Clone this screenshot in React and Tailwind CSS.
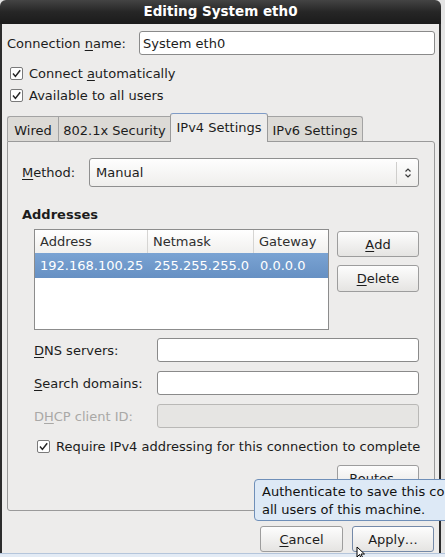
import React from "react";

function Check() {
  return (
    <span className="w-[13px] h-[13px] shrink-0 border border-[#7a7a7a] bg-white rounded-[2px] flex items-center justify-center">
      <svg width="11" height="11" viewBox="0 0 11 11">
        <path d="M2 5.6 L4.4 8.4 L9.2 2.2" fill="none" stroke="#262626" strokeWidth="1.5" />
      </svg>
    </span>
  );
}

function U({ children }) {
  return <span className="underline decoration-1 underline-offset-[2px]">{children}</span>;
}

function Btn({ children, className }) {
  return (
    <div
      className={
        "flex items-center justify-center rounded-[3px] border border-[#9d9d9d] bg-linear-to-b from-[#fdfdfd] to-[#e5e4e2] " +
        className
      }
    >
      {children}
    </div>
  );
}

function Field({ disabled }) {
  return (
    <div
      className={
        disabled
          ? "w-[262px] h-[24px] rounded-[3px] border border-[#b9b8b6] bg-[#e6e5e3]"
          : "w-[262px] h-[24px] rounded-[3px] border border-[#8a8a8a] bg-white"
      }
    />
  );
}

export default function App() {
  return (
    <div className="w-[445px] h-[557px] relative overflow-hidden bg-[#e4e4e4] font-['DejaVu_Sans',sans-serif] text-[13px] text-[#1c1c1c] leading-none flex flex-col">
      <div className="w-[441px] h-[553px] flex flex-col shrink-0">
        {/* Title bar */}
        <div className="h-[24px] shrink-0 rounded-t-[6px] bg-linear-to-b from-[#444444] via-[#262626] to-[#1b1b1b] text-white font-bold text-[13.5px] flex items-center justify-center">
          Editing System eth0
        </div>

        {/* Body */}
        <div className="flex-1 bg-[#edeceb] border-x-2 border-[#2c2c2c] flex flex-col pl-[5px] pr-[4px] pt-[7px]">
          {/* Connection name */}
          <div className="h-[24px] flex items-center">
            <div className="w-[132px]">
              Connection <U>n</U>ame:
            </div>
            <div className="w-[296px] h-[24px] rounded-[3px] border border-[#8a8a8a] bg-white flex items-center pl-[3px]">
              System eth0
            </div>
          </div>

          {/* Checkboxes */}
          <div className="mt-[7px] h-[22px] flex items-center pl-[3px] gap-[6px]">
            <Check />
            <span>
              Connect <U>a</U>utomatically
            </span>
          </div>
          <div className="h-[22px] flex items-center pl-[3px] gap-[6px]">
            <Check />
            <span>Available to all users</span>
          </div>

          {/* Tabs */}
          <div className="mt-[7px] h-[28px] flex items-end">
            <div className="w-[51px] h-[25px] bg-[#dcdad6] border-l border-t border-[#a3a3a3] rounded-tl-[3px] flex items-center justify-center pt-[3px]">
              Wired
            </div>
            <div className="w-[112px] h-[25px] bg-[#dcdad6] border-l border-t border-[#a3a3a3] flex items-center justify-center pt-[3px]">
              802.1x Security
            </div>
            <div className="relative z-10 w-[98px] h-[29px] -mb-px bg-[#edeceb] border-x border-t border-[#9a9a9a] border-t-[#7f9bc6] rounded-t-[3px] flex items-center justify-center pb-[1px]">
              IPv4 Settings
            </div>
            <div className="w-[95px] h-[25px] bg-[#dcdad6] border-r border-t border-[#a3a3a3] rounded-tr-[3px] flex items-center justify-center pt-[3px]">
              IPv6 Settings
            </div>
          </div>

          {/* Notebook panel */}
          <div className="h-[370px] border border-[#9a9a9a] rounded-b-[3px] rounded-tr-[3px] flex flex-col pl-[14px] pr-[15px] pt-[16px]">
            {/* Method */}
            <div className="h-[29px] flex items-center">
              <div className="w-[67px]">
                <U>M</U>ethod:
              </div>
              <div className="w-[330px] h-[29px] rounded-[3px] border border-[#8f8f8f] bg-linear-to-b from-[#fefefe] to-[#efeeec] flex items-center">
                <div className="flex-1 pl-[6px]">Manual</div>
                <div className="w-px h-[22px] bg-[#cfcecc]" />
                <div className="w-[21px] flex items-center justify-center">
                  <svg width="8" height="12" viewBox="0 0 8 12">
                    <path d="M1.5 4.5 L4 2 L6.5 4.5 M1.5 7.5 L4 10 L6.5 7.5" fill="none" stroke="#3a3a3a" strokeWidth="1.2" />
                  </svg>
                </div>
              </div>
            </div>

            {/* Addresses */}
            <div className="mt-[18px] h-[18px] flex items-center font-bold">Addresses</div>

            <div className="mt-[6px] flex">
              <div className="ml-[12px] w-[295px] h-[101px] border border-[#8c8c8c] bg-white flex flex-col">
                <div className="h-[23px] flex items-center bg-linear-to-b from-[#ffffff] to-[#f1f0ee] text-[#2e2e2e]">
                  <div className="w-[113px] h-full flex items-center pl-[5px] border-r border-[#d6d5d3]">Address</div>
                  <div className="w-[106px] h-full flex items-center pl-[5px] border-r border-[#d6d5d3]">Netmask</div>
                  <div className="flex-1 h-full flex items-center pl-[5px]">Gateway</div>
                </div>
                <div className="h-[25px] flex items-center bg-linear-to-b from-[#7aa3d3] to-[#6690c3] text-white">
                  <div className="w-[114px] pl-[5px]">192.168.100.25</div>
                  <div className="w-[106px] pl-[5px]">255.255.255.0</div>
                  <div className="flex-1 pl-[5px]">0.0.0.0</div>
                </div>
              </div>
              <div className="ml-[8px] flex flex-col">
                <Btn className="mt-[2px] w-[82px] h-[26px]">
                  <U>A</U>dd
                </Btn>
                <Btn className="mt-[8px] w-[82px] h-[27px]">
                  <U>D</U>elete
                </Btn>
              </div>
            </div>

            {/* Fields */}
            <div className="mt-[8px] ml-[12px] h-[24px] flex items-center">
              <div className="w-[123px]">
                <U>D</U>NS servers:
              </div>
              <Field />
            </div>
            <div className="mt-[9px] ml-[12px] h-[24px] flex items-center">
              <div className="w-[123px]">
                <U>S</U>earch domains:
              </div>
              <Field />
            </div>
            <div className="mt-[9px] ml-[12px] h-[24px] flex items-center">
              <div className="w-[123px] text-[#a9a8a6]">
                D<U>H</U>CP client ID:
              </div>
              <Field disabled />
            </div>

            <div className="mt-[9px] h-[18px] flex items-center pl-[15px] gap-[6px] whitespace-nowrap">
              <Check />
              <span>Require IPv4 addressing for this connection to complete</span>
            </div>

            <div className="mt-[10px] flex justify-end">
              <Btn className="w-[82px] h-[27px]">Routes…</Btn>
            </div>
          </div>

          {/* Bottom buttons */}
          <div className="mt-[15px] flex justify-end gap-[9px] pr-[1px]">
            <Btn className="w-[83px] h-[26px]">
              <U>C</U>ancel
            </Btn>
            <Btn className="w-[82px] h-[26px] border-[#7489a8]">Apply…</Btn>
          </div>
        </div>
      </div>

      {/* Bottom strip */}
      <div className="h-[4px] shrink-0 border-t border-[#b4c5db] bg-[#e3ebf5]" />

      {/* Tooltip */}
      <div className="absolute left-[254px] top-[479px] w-[280px] h-[42px] rounded-[4px] border border-[#6f8fb8] bg-[#dde9f6] pl-[7px] pt-[3px] leading-[18px] whitespace-nowrap text-[#111]">
        <div>Authenticate to save this connection for</div>
        <div>all users of this machine.</div>
      </div>

      {/* Mouse cursor */}
      <svg className="absolute left-[356px] top-[546px]" width="10" height="14" viewBox="0 0 10 14">
        <path d="M1 1 L1 11 L3.5 8.5 L5.5 13 L7 12.3 L5 8 L8.5 8 Z" fill="#fff" stroke="#000" strokeWidth="1" />
      </svg>
    </div>
  );
}
